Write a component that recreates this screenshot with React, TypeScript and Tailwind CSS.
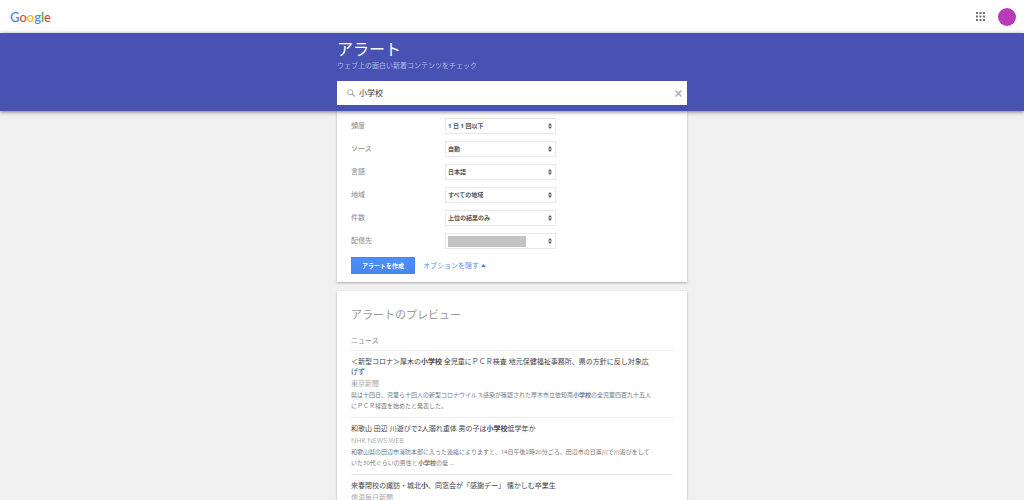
import { useState } from "react";
import type { ReactNode } from "react";

const logoLetters = [
  { char: "G", color: "text-[#4285f4]" },
  { char: "o", color: "text-[#ea4335]" },
  { char: "o", color: "text-[#fbbc05]" },
  { char: "g", color: "text-[#4285f4]" },
  { char: "l", color: "text-[#34a853]" },
  { char: "e", color: "text-[#ea4335]" },
];

const fields = [
  { id: "frequency", label: "頻度", value: "1 日 1 回以下" },
  { id: "source", label: "ソース", value: "自動" },
  { id: "language", label: "言語", value: "日本語" },
  { id: "region", label: "地域", value: "すべての地域" },
  { id: "count", label: "件数", value: "上位の結果のみ" },
  { id: "deliver", label: "配信先", value: "" },
];

type Article = { title: ReactNode; source: string; body?: ReactNode };

const articles: Article[] = [
  {
    title: (
      <>
        ＜新型コロナ＞厚木の<b>小学校</b> 全児童にＰＣＲ検査 地元保健福祉事務所、県の方針に反し対象広
        <br />
        げず
      </>
    ),
    source: "東京新聞",
    body: (
      <>
        県は十四日、児童ら十四人の新型コロナウイルス感染が確認された厚木市立依知南<b>小学校</b>の全児童四百九十五人
        <br />
        にＰＣＲ検査を始めたと発表した。
      </>
    ),
  },
  {
    title: (
      <>
        和歌山 田辺 川遊びで2人溺れ重体 男の子は<b>小学校</b>低学年か
      </>
    ),
    source: "NHK NEWS WEB",
    body: (
      <>
        和歌山県の田辺市消防本部に入った連絡によりますと、14日午後2時20分ごろ、田辺市の日置川で川遊びをして
        <br />
        いた30代ぐらいの男性と<b>小学校</b>の低 ...
      </>
    ),
  },
  {
    title: (
      <>
        来春閉校の諏訪・城北<b>小</b>、同窓会が「感謝デー」 懐かしむ卒業生
      </>
    ),
    source: "信濃毎日新聞",
  },
];

const AppsIcon = () => (
  <svg viewBox="0 0 9 9" className="w-[9px] h-[9px] fill-[#6b6f74]">
    {[0, 3.5, 7].map((y) =>
      [0, 3.5, 7].map((x) => <rect key={`${x}-${y}`} x={x} y={y} width="2" height="2" />)
    )}
  </svg>
);

const SearchIcon = () => (
  <svg viewBox="0 0 8 8" className="w-2 h-2 shrink-0" fill="none" stroke="#aaa" strokeWidth="1">
    <circle cx="3.2" cy="3.2" r="2.6" />
    <path d="M5 5 7.6 7.6" strokeWidth="1.3" />
  </svg>
);

const Header = () => (
  <header className="flex items-center justify-between h-[33px] pl-2.5 pr-2 bg-white">
    <a href="#" aria-label="Google" className="font-['Lato','Liberation_Sans',sans-serif] text-[13px] leading-4 font-medium">
      {logoLetters.map(({ char, color }, i) => (
        <span key={i} className={color}>{char}</span>
      ))}
    </a>
    <div className="flex items-center gap-[13px]">
      <button aria-label="アプリ"><AppsIcon /></button>
      <button aria-label="アカウント" className="w-[18px] h-[18px] rounded-full bg-[#b83bba]" />
    </div>
  </header>
);

const Banner = () => {
  const [query, setQuery] = useState("小学校");
  return (
    <section className="relative bg-[#4852b3] shadow-[0_1px_4px_rgba(0,0,0,0.5)] pt-1.5 pb-1.5">
      <div className="w-full max-w-[350px] mx-auto">
        <h1 className="text-[16px] leading-5 text-white">アラート</h1>
        <p className="text-[7px] leading-[14px] text-[#b3b8e3]">ウェブ上の面白い新着コンテンツをチェック</p>
        <div className="flex items-center gap-1 h-6 mt-2 pl-2.5 pr-[5px] bg-white">
          <SearchIcon />
          <input
            aria-label="検索"
            value={query}
            onChange={(e) => setQuery(e.target.value)}
            className="grow min-w-0 text-[8px] leading-4 text-[#333] outline-none"
          />
          <button aria-label="クリア" onClick={() => setQuery("")}>
            <svg viewBox="0 0 7 7" className="w-[7px] h-[7px]" stroke="#aaa" strokeWidth="1.4">
              <path d="M0.5 0.5 6.5 6.5M6.5 0.5 0.5 6.5" />
            </svg>
          </button>
        </div>
      </div>
    </section>
  );
};

const SelectField = ({ id, label, value }: { id: string; label: string; value: string }) => (
  <div className="flex items-center h-4">
    <label htmlFor={id} className="w-[94px] text-[7px] leading-3 text-[#888]">{label}</label>
    <div className="relative w-[111px]">
      <select
        id={id}
        className="block w-full h-4 pl-0.5 pr-3 appearance-none border border-[#e8e8e8] bg-white text-[6px] leading-3 font-bold text-[#555]"
      >
        <option>{value}</option>
      </select>
      {!value && <span className="absolute left-[3px] top-[3px] w-[78px] h-[11px] bg-[#c3c3c3] pointer-events-none" />}
      <svg viewBox="0 0 4 6" className="absolute right-1 top-[5px] w-1 h-1.5 fill-[#555] pointer-events-none">
        <path d="M0 2.4 2 0 4 2.4ZM0 3.6 2 6 4 3.6Z" />
      </svg>
    </div>
  </div>
);

const OptionsCard = () => (
  <section className="bg-white shadow-[0_1px_2px_rgba(0,0,0,0.3)] px-3.5 pt-[7px] pb-2">
    <div className="flex flex-col gap-[7px]">
      {fields.map((field) => (
        <SelectField key={field.id} {...field} />
      ))}
    </div>
    <div className="flex items-center gap-2 mt-2">
      <button className="w-16 h-[17px] border border-[#4787ed] bg-linear-to-b from-[#4d90fe] to-[#4787ed] text-[6px] leading-3 font-bold text-white">
        アラートを作成
      </button>
      <a href="#" className="flex items-center gap-0.5 text-[7px] leading-3 text-[#5a8ff0]">
        オプションを隠す
        <svg viewBox="0 0 5 3" className="w-[5px] h-[3px] fill-[#4285f4]">
          <path d="M0 3 2.5 0 5 3Z" />
        </svg>
      </a>
    </div>
  </section>
);

const PreviewCard = () => (
  <section className="bg-white shadow-[0_1px_2px_rgba(0,0,0,0.3)] px-3.5 pt-4 pb-2">
    <h2 className="text-[11px] leading-4 text-[#999]">アラートのプレビュー</h2>
    <h3 className="mt-3 mb-[3px] text-[7px] leading-3 text-[#888]">ニュース</h3>
    {articles.map(({ title, source, body }) => (
      <article key={source} className="border-t border-[#ececec] pt-1.5 pb-[5px]">
        <a href="#" className="block text-[7px] leading-[10px] text-[#444]">{title}</a>
        <p className="mt-0.5 text-[7px] leading-[10px] text-[#aaa]">{source}</p>
        {body && <p className="mt-px text-[6px] leading-[11px] text-[#777]">{body}</p>}
      </article>
    ))}
  </section>
);

const App = () => {
  return (
    <div className="min-h-screen bg-[#f0f0f0] font-['Open_Sans','Noto_Sans_CJK_JP',sans-serif]">
      <Header />
      <Banner />
      <main className="flex flex-col gap-[9px] w-full max-w-[350px] mx-auto">
        <OptionsCard />
        <PreviewCard />
      </main>
    </div>
  );
};

export default App;
